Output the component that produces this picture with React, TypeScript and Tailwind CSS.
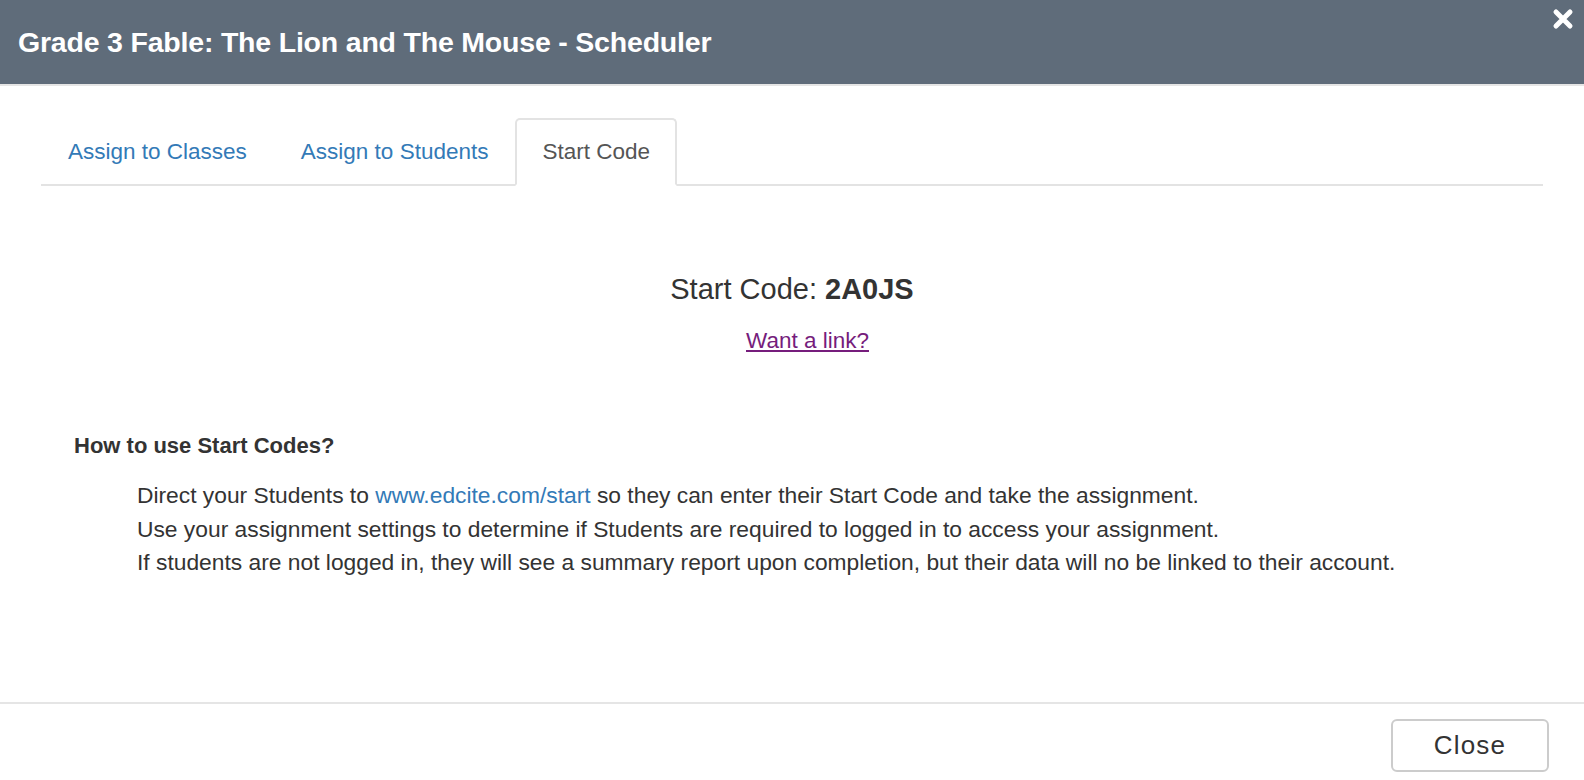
import { useState } from "react";

const tabs = ["Assign to Classes", "Assign to Students", "Start Code"];

const SchedulerModal = () => {
  const [active, setActive] = useState(2);

  return (
    <div className="w-full h-[780px] flex flex-col bg-white text-[#333] font-['Liberation_Sans',Arial,sans-serif]">
      {/* Header */}
      <div className="relative h-[86px] shrink-0 bg-[#5f6c7a] border-b-2 border-[#e5e5e5] flex items-center px-[18px]">
        <h4 className="text-[28.5px] font-bold text-white tracking-[-0.2px]">
          Grade 3 Fable: The Lion and The Mouse - Scheduler
        </h4>
        <button className="absolute top-[8px] right-[10px] text-white">
          <svg width="22" height="22" viewBox="0 0 22 22">
            <path
              d="M4 4 L18 18 M18 4 L4 18"
              stroke="white"
              strokeWidth="5"
              strokeLinecap="round"
            />
          </svg>
        </button>
      </div>

      {/* Body */}
      <div className="flex-1 px-[41px] pt-[32px]">
        <ul className="flex border-b-2 border-[#e3e3e3]">
          {tabs.map((t, i) => (
            <li key={t} className="-mb-[2px]">
              <button
                onClick={() => setActive(i)}
                className={
                  i === active
                    ? "h-[68px] px-[25px] text-[22.5px] text-[#555] bg-white border-2 border-[#e3e3e3] rounded-t-[5px] border-b-white"
                    : "h-[68px] px-[25px] text-[22.5px] text-[#337ab7] border-2 border-transparent"
                }
              >
                {t}
              </button>
            </li>
          ))}
        </ul>

        <div className="mt-[85px] text-center">
          <div className="text-[29px] leading-[36px]">
            Start Code: <span className="font-bold">2A0JS</span>
          </div>
          <a
            href="#"
            className="inline-block mt-[19px] ml-[31px] text-[22.5px] leading-[30px] text-[#761d7c] underline"
          >
            Want a link?
          </a>
        </div>

        <div className="mt-[77px] pl-[33px]">
          <h5 className="text-[22px] font-bold leading-[26px]">
            How to use Start Codes?
          </h5>
          <div className="mt-[20px] pl-[63px] text-[22.8px] leading-[33.5px]">
            <p>
              Direct your Students to{" "}
              <a href="#" className="text-[#337ab7]">
                www.edcite.com/start
              </a>{" "}
              so they can enter their Start Code and take the assignment.
            </p>
            <p>
              Use your assignment settings to determine if Students are required
              to logged in to access your assignment.
            </p>
            <p>
              If students are not logged in, they will see a summary report upon
              completion, but their data will no be linked to their account.
            </p>
          </div>
        </div>
      </div>

      {/* Footer */}
      <div className="h-[78px] shrink-0 border-t-2 border-[#e5e5e5] flex items-start justify-end pt-[15px] pr-[35px]">
        <button className="w-[158px] h-[53px] rounded-[6px] border-2 border-[#ccc] bg-white text-[26px] tracking-[1.2px] text-[#333]">
          Close
        </button>
      </div>
    </div>
  );
};

export default SchedulerModal;
